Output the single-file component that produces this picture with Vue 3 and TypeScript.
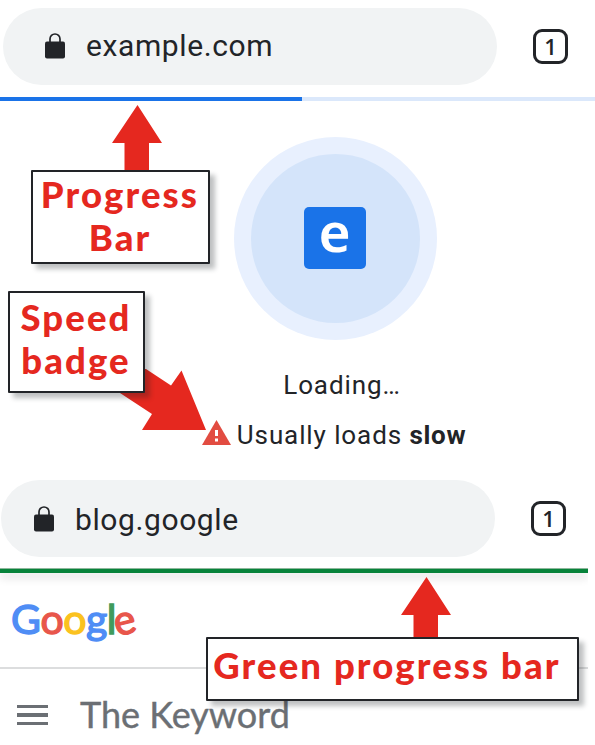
<script setup lang="ts">
interface Bar {
  id: string
  url: string
}

interface Letter {
  char: string
  tone: string
}

const loadingTab: Bar = { id: 'loading', url: 'example.com' }
const loadedTab: Bar = { id: 'loaded', url: 'blog.google' }
const progress = 50.7

const wordmark: Letter[] = [
  { char: 'G', tone: 'blue' },
  { char: 'o', tone: 'red' },
  { char: 'o', tone: 'yellow' },
  { char: 'g', tone: 'blue' },
  { char: 'l', tone: 'green' },
  { char: 'e', tone: 'red tilt' },
]
</script>

<template>
  <main class="page">
    <section class="screen">
      <header class="toolbar">
        <div class="omnibox">
          <svg class="lock" viewBox="0 0 20 26">
            <path class="shackle" d="M5 10V6a5 5 0 0 1 10 0V10" />
            <rect x="0" y="8.500" width="20" height="17" rx="2" />
          </svg>
          <span class="url">{{ loadingTab.url }}</span>
        </div>
        <div class="tabs">1</div>
      </header>
      <div class="track"><div class="fill" :style="{ width: progress + '%' }"></div></div>
      <div class="splash">
        <div class="halo"><div class="disc"><div class="favicon">e</div></div></div>
        <p class="status">Loading…</p>
        <p class="speed">
          <svg class="warn" viewBox="0 0 29 25">
            <path d="M14.5 0L29 25H0z" />
            <path class="mark" d="M14.5 10v6M14.5 18.500v3" />
          </svg>
          <span>Usually loads <b>slow</b></span>
        </p>
      </div>
    </section>

    <section class="screen blog">
      <header class="toolbar second">
        <div class="omnibox">
          <svg class="lock" viewBox="0 0 20 26">
            <path class="shackle" d="M5 10V6a5 5 0 0 1 10 0V10" />
            <rect x="0" y="8.500" width="20" height="17" rx="2" />
          </svg>
          <span class="url">{{ loadedTab.url }}</span>
        </div>
        <div class="tabs">1</div>
      </header>
      <div class="done"></div>
      <div class="brand">
        <span v-for="(l, i) in wordmark" :key="i" class="glyph" :class="l.tone">{{ l.char }}</span>
      </div>
      <nav class="nav">
        <span class="menu"><i></i><i></i><i></i></span>
        <span class="title">The Keyword</span>
      </nav>
    </section>

    <svg class="arrows" viewBox="0 0 595 745">
      <path d="M137.5 105L162 143H149V172H124.500V143H112z" />
      <path d="M146 369L171 385.500L181.500 370.500L206 430H142L152 414L120 393V369z" />
      <path d="M426.500 577L451 615H438V640H413.500V615H401z" />
    </svg>
    <div class="callout progress-note">Progress<br />Bar</div>
    <div class="callout badge-note">Speed<br />badge</div>
    <div class="callout green-note">Green progress bar</div>
  </main>
</template>

<style>
body {
  margin: 0;
  background: #fff;
}
</style>

<style scoped>
.page {
  position: relative;
  width: 595px;
  height: 745px;
  overflow: hidden;
  background: #fff;
  font-family: Roboto, 'Liberation Sans', sans-serif;
  color: #222428;
}
.screen {
  height: 472px;
}
.toolbar {
  box-sizing: border-box;
  display: flex;
  align-items: center;
  height: 97px;
  padding: 8px 27px 12px 3px;
}
.toolbar.second {
  padding: 8px 29px 12px 1px;
}
.omnibox {
  box-sizing: border-box;
  display: flex;
  align-items: center;
  width: 494px;
  height: 77px;
  padding-left: 42px;
  border-radius: 39px;
  background: #f1f3f4;
}
.second .omnibox {
  padding-left: 33px;
}
.lock {
  width: 20px;
  height: 26px;
  margin-bottom: 2px;
  fill: #222428;
}
.second .lock {
  margin-bottom: 0;
}
.shackle {
  fill: none;
  stroke: #222428;
  stroke-width: 1.7;
}
.url {
  margin-left: 21px;
  margin-bottom: 2px;
  font-size: 30px;
  line-height: 36px;
  letter-spacing: 0.6px;
}
.second .url {
  margin: 2px 0 0 21px;
}
.tabs {
  box-sizing: border-box;
  width: 35px;
  height: 35px;
  margin-left: auto;
  border: 3.5px solid #222428;
  border-radius: 9px;
  font: 600 22px/29px 'Open Sans', sans-serif;
  text-align: center;
}
.track {
  height: 4px;
  background: #dbe8fb;
}
.fill {
  height: 4px;
  background: #1a73e8;
}
.splash {
  display: flex;
  flex-direction: column;
  align-items: center;
  width: 671px;
  padding-top: 36px;
}
.halo,
.disc,
.favicon {
  display: flex;
  align-items: center;
  justify-content: center;
}
.halo {
  width: 203px;
  height: 203px;
  border-radius: 50%;
  background: #e8f0fe;
}
.disc {
  width: 169px;
  height: 169px;
  border-radius: 50%;
  background: #d4e4fa;
}
.favicon {
  box-sizing: border-box;
  width: 62px;
  height: 62px;
  margin: 0 2px 2px 0;
  padding: 0 0 14px 0;
  border-radius: 5px;
  background: #1a73e8;
  color: #fff;
  font: 600 55px/48px 'Noto Sans', sans-serif;
}
.status {
  margin: 29px 0 0 13px;
  font-size: 26px;
  line-height: 32px;
  letter-spacing: 0.9px;
}
.speed {
  display: flex;
  align-items: center;
  gap: 6px;
  margin: 18px 3px 0 0;
  font-size: 26px;
  line-height: 32px;
  letter-spacing: 0.9px;
  white-space: nowrap;
}
.speed b {
  letter-spacing: 0.7px;
}
.warn {
  width: 29px;
  height: 25px;
  margin-bottom: 6px;
  fill: #e24c41;
}
.mark {
  stroke: #fff;
  stroke-width: 3;
}
.blog {
  height: 273px;
}
.done {
  width: 588px;
  height: 4px;
  margin-top: -1px;
  border-top: 1px solid #8eb79c;
  background: #07833a;
  box-shadow: 0 5px 9px rgba(0, 0, 0, 0.13);
  clip-path: inset(0 0 -16px 0);
}
.brand {
  box-sizing: border-box;
  display: flex;
  width: 588px;
  height: 96px;
  padding: 22px 0 0 11px;
  border-bottom: 2px solid #dcddde;
  font: 400 41px/48px Lato, sans-serif;
  letter-spacing: -0.5px;
}
.glyph {
  -webkit-text-stroke: 1.4px currentColor;
}
.blue { color: #4f8df5; }
.red { color: #e8564b; }
.yellow { color: #fbc21f; }
.green { color: #3f9b5c; }
.tilt {
  transform: rotate(-14deg);
}
.nav {
  display: flex;
  align-items: center;
  height: 92px;
  padding-left: 17px;
  color: #6b6f74;
}
.menu {
  display: flex;
  flex-direction: column;
  gap: 5px;
  width: 31px;
}
.menu i {
  height: 3.600px;
  background: #6b6f74;
}
.title {
  margin: 0 0 2px 32px;
  font: 400 36px/44px Lato, sans-serif;
  -webkit-text-stroke: 0.4px currentColor;
}
.arrows {
  position: absolute;
  top: 0;
  left: 0;
  width: 595px;
  height: 745px;
  fill: #e5281f;
}
.callout {
  position: absolute;
  box-sizing: border-box;
  border: 2px solid #222428;
  border-radius: 1px;
  background: #fff;
  box-shadow: 5px 5px 5px rgba(20, 28, 32, 0.28);
  color: #e5281f;
  font: 900 36.500px/43px Lato, sans-serif;
  letter-spacing: 2.1px;
  text-align: center;
  white-space: nowrap;
}
.progress-note {
  top: 170px;
  left: 31px;
  width: 179px;
  height: 94px;
  padding: 1px 1px 0 0;
}
.badge-note {
  top: 291px;
  left: 8px;
  width: 137px;
  height: 102px;
  padding: 3px 1px 0 0;
}
.green-note {
  top: 637px;
  left: 206px;
  width: 373px;
  height: 64px;
  padding: 5px 11px 0 0;
}
</style>
